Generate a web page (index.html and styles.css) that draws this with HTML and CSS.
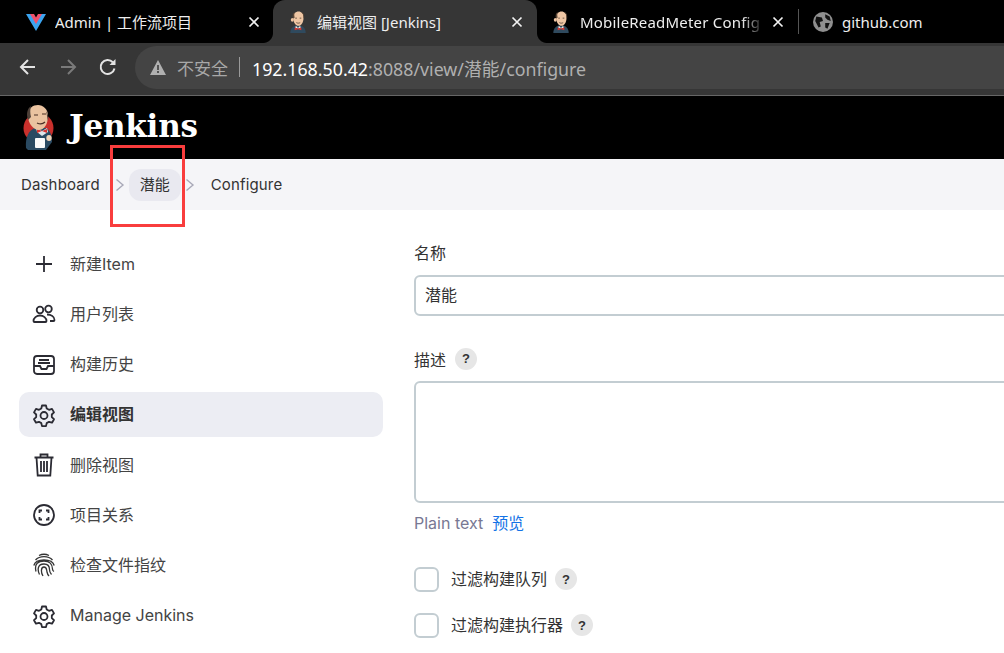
FILE: index.html
```html
<!DOCTYPE html>
<html lang="zh">
<head>
<meta charset="utf-8">
<title>编辑视图 [Jenkins]</title>
<link rel="stylesheet" href="styles.css">
</head>
<body>
<svg class="defs" width="0" height="0">
  <defs>
    <symbol id="butler" viewBox="0 0 36 40">
      <path d="M4 40c0-8 5-14 14-14s14 6 14 14z" fill="#2f4a5e"/>
      <path d="M14 27l4 4 4-4 1 5h-10z" fill="#f0ede6"/>
      <path d="M12 30l6 2 6-2v5l-6-2-6 2z" fill="#d33833"/>
      <path d="M9 14C8 5 14 1 19 1s10 4 9 12c0 7-4 14-9 14S10 21 9 14z" fill="#efc6a4"/>
      <path d="M9 14C7 8 9 4 12 2c-1 4-1 7 0 10zM28 12c0-4-1-7-4-10 4 1 6 6 5 12z" fill="#5b4636"/>
      <ellipse cx="7.500" cy="16" rx="2.500" ry="3.500" fill="#efc6a4"/>
      <path d="M13 13h3M21 13h3M15 21c2 1.500 5 1.500 7 0" stroke="#33251c" stroke-width="1.200" fill="none"/>
    </symbol>
    <symbol id="closex" viewBox="0 0 12 12">
      <path d="M1.500 1.500l9 9M10.500 1.500l-9 9" stroke="#f2f2f2" stroke-width="1.700" fill="none"/>
    </symbol>
  </defs>
</svg>

<header class="tabstrip">
  <div class="tab">
    <svg class="favicon" viewBox="0 0 20 20"><path d="M0 2h6l4 7 4-7h6L10 19z" fill="#3ba4f0"/><path d="M4 2h4l2 3.500L12 2h4l-6 10z" fill="#f0506a"/></svg>
    <span class="tab-title">Admin | 工作流项目</span>
    <svg class="tab-close"><use href="#closex"/></svg>
  </div>
  <div class="tab tab-active">
    <svg class="favicon"><use href="#butler"/></svg>
    <span class="tab-title">编辑视图 [Jenkins]</span>
    <svg class="tab-close"><use href="#closex"/></svg>
  </div>
  <div class="tab tab-third">
    <svg class="favicon"><use href="#butler"/></svg>
    <span class="tab-title tab-fade">MobileReadMeter Config</span>
    <svg class="tab-close"><use href="#closex"/></svg>
  </div>
  <div class="tab tab-last">
    <svg class="favicon" viewBox="0 0 18 18"><circle cx="9" cy="9" r="9" fill="#8f8f8f"/><path d="M3 4l5 1 1 3-3 1 1 4-2 1-3-6zM11 2l4 2 1 4-3-1-2-2zM11 10l4 0-2 5-2-1z" fill="#111"/></svg>
    <span class="tab-title">github.com</span>
  </div>
</header>

<nav class="toolbar">
  <svg class="nav-icon" viewBox="0 0 20 20"><path d="M17 10H3.500M10 3l-7 7 7 7" fill="none" stroke="#e3e3e3" stroke-width="2"/></svg>
  <svg class="nav-icon dim" viewBox="0 0 20 20"><path d="M3 10h13.500M10 3l7 7-7 7" fill="none" stroke="#7a7a7a" stroke-width="2"/></svg>
  <svg class="nav-icon" viewBox="0 0 20 20"><path d="M16.500 11.500a7 7 0 1 1-1.700-6.300" fill="none" stroke="#e3e3e3" stroke-width="2"/><path d="M17.500 2v6h-6z" fill="#e3e3e3"/></svg>
  <div class="omnibox">
    <svg class="warn" viewBox="0 0 16 15"><path d="M8 0l8 15H0z" fill="#b0b0b0"/><path d="M7.200 5h1.600v5H7.200zM7.200 11h1.600v2H7.200z" fill="#3c3c3c"/></svg>
    <span class="insecure">不安全</span>
    <span class="omni-sep"></span>
    <span class="url"><b class="host">192.168.50.42</b>:8088/view/潜能/configure</span>
  </div>
</nav>

<div class="brand">
  <svg class="brand-logo" viewBox="7 7 36 46">
    <circle cx="23.500" cy="30" r="15" fill="#c9302c"/>
    <path d="M11 50c-1-11 3-18 9-20h11c5 3 6 9 6 14l-6 8H13z" fill="#2a4a62"/>
    <path d="M21 30l6 3 5-3 1 4-6 4-5-4z" fill="#dfe6ea"/>
    <path d="M22 31l5 2 5-2v4l-5-2-5 2z" fill="#d9322d"/>
    <path d="M13 18C13 10 18 7 23 7s10 4 10 11c0 8-4 14-9 14s-11-6-11-14z" fill="#eac3a0"/>
    <path d="M13 22c-2-6-1-11 3-14-1 4-1 7 0 11zM31 13c2 3 3 6 2 10-1-3-1-7-2-10z" fill="#4d4038"/>
    <path d="M19 17h4M27 16h4M22 25c3 1.500 6 1 8-1" stroke="#4a3025" stroke-width="1.200" fill="none"/>
    <rect x="20" y="40" width="10" height="10" rx="1" fill="#fafafa"/>
    <ellipse cx="34" cy="40" rx="2.700" ry="3" fill="#f0d4b8"/>
  </svg>
  <span class="brand-name">Jenkins</span>
</div>

<div class="crumbs">
  <span class="crumb crumb-first">Dashboard</span>
  <svg class="crumb-sep" viewBox="0 0 10 14"><path d="M1.500 1.500L8 7l-6.500 5.500" fill="none" stroke="#a9a9b8" stroke-width="1.400"/></svg>
  <span class="crumb crumb-current">潜能</span>
  <svg class="crumb-sep crumb-sep-tight" viewBox="0 0 10 14"><path d="M1.500 1.500L8 7l-6.500 5.500" fill="none" stroke="#a9a9b8" stroke-width="1.400"/></svg>
  <span class="crumb crumb-last">Configure</span>
</div>
<div class="callout"></div>

<div class="page">
  <aside class="sidebar">
    <a class="side-item">
      <svg class="side-icon" viewBox="0 0 24 24"><path d="M12 4v16M4 12h16"/></svg>
      <span>新建Item</span>
    </a>
    <a class="side-item">
      <svg class="side-icon" viewBox="0 0 24 24"><circle cx="8" cy="8" r="3.300"/><circle cx="16.500" cy="7" r="3.300"/><path d="M1.500 19c0-3 3-5.500 6.500-5.500s6.500 2.500 6.500 5.500c0 .6-.4 1-1 1h-11c-.6 0-1-.4-1-1zM15 12.500c4 0 7.500 2 7.500 5.500 0 .6-.4 1-1 1h-3.500"/></svg>
      <span>用户列表</span>
    </a>
    <a class="side-item">
      <svg class="side-icon" viewBox="0 0 24 24"><rect x="2" y="3" width="20" height="18" rx="3"/><path d="M2 13h6l1.500 3h5l1.500-3h6M7 7h10M6 10h12"/></svg>
      <span>构建历史</span>
    </a>
    <a class="side-item side-active">
      <svg class="side-icon" viewBox="0 0 24 24"><path d="M10 2.500h4l.7 3 2.300 1.300 3-.9 2 3.500-2.200 2.100v2.600l2.200 2.100-2 3.500-3-.9-2.300 1.300-.7 3h-4l-.7-3L7 18.800l-3 .9-2-3.500 2.200-2.100v-2.600L2 9.400l2-3.500 3 .9 2.300-1.300z" stroke-linejoin="round"/><circle cx="12" cy="12.500" r="3.500"/></svg>
      <span>编辑视图</span>
    </a>
    <a class="side-item">
      <svg class="side-icon" viewBox="0 0 24 24"><path d="M2.500 4.500h19M8.500 4.500V1.500h7v3M4.500 4.500l1.200 18h12.600l1.200-18M9 8v11M12 8v11M15 8v11"/></svg>
      <span>删除视图</span>
    </a>
    <a class="side-item">
      <svg class="side-icon" viewBox="0 0 24 24"><circle cx="12" cy="12" r="10"/><path d="M7.500 10V7.500H10M14 7.500h2.500V10M16.500 14v2.500H14M10 16.500H7.500V14"/></svg>
      <span>项目关系</span>
    </a>
    <a class="side-item">
      <svg class="side-icon side-thin" viewBox="0 0 24 24"><path d="M7 2.500c3-1.500 7-1.500 10 0M3.500 7c4-4.500 13-4.500 17 0M1.800 12.500c2-7.500 18.400-7.500 20.400 0M4 18.500c-2-8 2.500-10.500 8-10.500s8.500 3 8.500 8c0 1 .5 2 1.500 2.500M7.500 21.500c-2-4-2.500-10.500 4.500-10.500 4 0 5.500 2.500 5.500 5.500 0 2 1 4 2 5M11 23c-2-3-2.500-9 1-9 3 0 2.500 3 3 5 .3 1.500 1 3 2 4"/></svg>
      <span>检查文件指纹</span>
    </a>
    <a class="side-item side-latin">
      <svg class="side-icon" viewBox="0 0 24 24"><path d="M10 2.500h4l.7 3 2.300 1.300 3-.9 2 3.500-2.200 2.100v2.600l2.200 2.100-2 3.500-3-.9-2.300 1.300-.7 3h-4l-.7-3L7 18.800l-3 .9-2-3.500 2.200-2.100v-2.600L2 9.400l2-3.500 3 .9 2.300-1.300z" stroke-linejoin="round"/><circle cx="12" cy="12.500" r="3.500"/></svg>
      <span>Manage Jenkins</span>
    </a>
  </aside>

  <main class="form">
    <label class="field-label">名称</label>
    <input class="text-input" type="text" value="潜能">
    <div class="field-label label-desc">描述 <span class="help">?</span></div>
    <textarea class="text-area"></textarea>
    <div class="hint">Plain text<a class="preview">预览</a></div>
    <div class="check-row check-first"><span class="check"></span><span class="check-text">过滤构建队列</span><span class="help">?</span></div>
    <div class="check-row"><span class="check"></span><span class="check-text">过滤构建执行器</span><span class="help">?</span></div>
  </main>
</div>
</body>
</html>
```

FILE: styles.css
```css
* { box-sizing: border-box; }
html, body { margin: 0; padding: 0; height: 653px; overflow: hidden; background: #fff; }
body { position: relative; width: 1004px; font-family: "Inter", "Noto Sans CJK SC", sans-serif; color: #333; }
.defs { position: absolute; }

.tabstrip { display: flex; height: 43px; background: #000; color: #eee; font-family: "Noto Sans", "Noto Sans CJK SC", sans-serif; font-size: 15px; overflow: hidden; }
.tab { display: flex; align-items: center; width: 273px; padding: 0 13px 0 26px; height: 43px; flex: none; }
.tab-active { position: relative; z-index: 1; width: 264px; padding-left: 15px; background: #363636; border-radius: 12px 12px 0 0; padding-right: 14px; }
.tab-active::before, .tab-active::after { content: ""; position: absolute; bottom: 0; width: 10px; height: 10px; }
.tab-active::before { left: -10px; background: radial-gradient(circle at 0 0, #000 9.500px, #363636 10.500px); }
.tab-active::after { right: -10px; background: radial-gradient(circle at 100% 0, #000 9.500px, #363636 10.500px); }
.tab-third { width: 262px; padding-left: 14px; padding-right: 15px; position: relative; }
.tab-third::after { content: ""; position: absolute; right: 0; top: 9px; height: 25px; width: 1px; background: #555; }
.tab-last { padding-left: 14px; }
.favicon { width: 20px; height: 22px; flex: none; margin-right: 9px; }
.tab-title { flex: 1; white-space: nowrap; overflow: hidden; min-width: 0; }
.tab-fade { letter-spacing: .2px; -webkit-mask-image: linear-gradient(90deg, #000 88%, transparent); mask-image: linear-gradient(90deg, #000 88%, transparent); }
.tab-close { flex: none; margin-left: 8px; width: 12px; height: 12px; }

.toolbar { display: flex; align-items: center; height: 52px; background: #363636; padding: 0 0 4px 18px; font-family: "Noto Sans", "Noto Sans CJK SC", sans-serif; }
.nav-icon { width: 20px; height: 20px; flex: none; margin-right: 20px; }
.omnibox { flex: 1; display: flex; align-items: center; height: 43px; margin-left: -3px; background: #444; border-radius: 22px 0 0 22px; padding-left: 15px; font-size: 17.800px; color: #b0b0b0; white-space: nowrap; }
.warn { width: 16px; height: 15px; margin-right: 11px; }
.insecure { font-size: 17px; color: #a8a8a8; line-height: 24px; margin-top: 3px; }
.url { line-height: 24px; margin-top: 3px; }
.omni-sep { width: 1px; height: 20px; background: #9a9a9a; margin: 0 12px 0 11px; }
.host { font-weight: 400; color: #fff; }

.brand { display: flex; align-items: center; height: 64px; background: #000; border-top: 1px solid #666; padding-left: 22px; }
.brand-logo { width: 36px; height: 46px; flex: none; margin-right: 11px; }
.brand-name { font-family: "DejaVu Serif", serif; font-weight: 700; font-size: 31px; color: #fff; letter-spacing: -0.2px; margin-top: -4px; }

.crumbs { display: flex; align-items: center; height: 51px; background: #f5f5f8; padding-left: 21px; font-size: 15px; color: #333; }
.crumb-first, .crumb-last { letter-spacing: .15px; }
.crumb-sep { width: 10px; height: 14px; margin: 0 3.500px 0 15.500px; flex: none; }
.crumb-current { display: flex; align-items: center; justify-content: center; width: 52px; height: 32px; padding-bottom: 2px; border-radius: 12px; background: #e9e9f0; }
.crumb-sep-tight { margin-left: 4.500px; }
.crumb-last { margin-left: 12px; }
.callout { position: absolute; left: 110px; top: 145px; width: 75px; height: 82px; border: 3px solid #f93d3d; }

.page { display: flex; padding: 31.800px 0 0 19px; }
.sidebar { width: 364px; flex: none; display: flex; flex-direction: column; margin-right: 31px; }
.side-item { display: flex; align-items: center; height: 45px; margin-bottom: 5.200px; padding-left: 13px; border-radius: 10px; font-size: 16px; color: #444; }
.side-item span { margin-top: -3px; }
.side-latin span { margin-top: -1px; }
.side-active { background: #ecedf3; font-weight: 700; color: #333; }
.side-icon { width: 24px; height: 24px; flex: none; margin-right: 14px; fill: none; stroke: #2b2b33; stroke-width: 1.800; }
.side-thin { stroke-width: 1.300; stroke: #333; }

.form { flex: 1; min-width: 0; font-size: 16px; overflow: hidden; margin-right: -20px; margin-top: -1px; }
.field-label { display: flex; align-items: center; height: 22px; color: #333; }
.text-input { display: block; width: 620px; height: 41px; margin-top: 12px; padding: 0 9px 3px; border: 2px solid #c3cdd2; border-radius: 6px; font: inherit; color: #333; background: #fff; }
.label-desc { margin-top: 32px; gap: 9px; }
.text-area { display: block; width: 620px; height: 122px; margin-top: 11px; border: 2px solid #c3cdd2; border-radius: 6px; resize: none; background: #fff; }
.hint { margin-top: 10px; height: 20px; line-height: 20px; color: #787893; }
.preview { margin-left: 9px; color: #1473e6; }
.help { display: inline-flex; align-items: center; justify-content: center; width: 22px; height: 22px; border-radius: 50%; background: #e6e6e6; font-family: "Liberation Sans", sans-serif; font-size: 13px; font-weight: 700; color: #333; flex: none; }
.check-row { display: flex; align-items: center; height: 25px; margin-top: 21px; }
.check-first { margin-top: 34px; }
.check { width: 25px; height: 25px; border: 2px solid #c3cdd2; border-radius: 6px; flex: none; margin-right: 12px; }
.check-text { margin-right: 8px; margin-top: -2px; color: #333; }
```
